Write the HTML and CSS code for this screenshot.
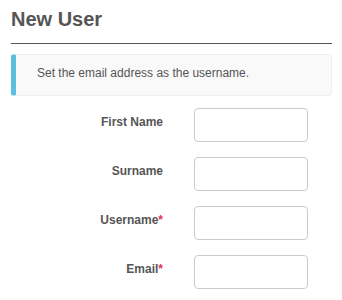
FILE: index.html
```html
<!DOCTYPE html>
<html lang="en">
<head>
    <meta charset="UTF-8">
    <meta name="viewport" content="width=device-width, initial-scale=1.0">
    <title>New User</title>
    <link rel="stylesheet" href="styles.css">
</head>
<body>
    <div class="container">
        <h1 class="page-title">New User</h1>

        <div class="callout">Set the email address as the username.</div>

        <form class="user-form">
            <div class="form-row">
                <label for="first-name">First Name</label>
                <input type="text" id="first-name">
            </div>
            <div class="form-row">
                <label for="surname">Surname</label>
                <input type="text" id="surname">
            </div>
            <div class="form-row">
                <label for="username">Username<span class="req">*</span></label>
                <input type="text" id="username">
            </div>
            <div class="form-row">
                <label for="email">Email<span class="req">*</span></label>
                <input type="email" id="email">
            </div>
        </form>
    </div>
</body>
</html>
```

FILE: styles.css
```css
body {
    margin: 0;
    font-family: "Liberation Sans", Arial, sans-serif;
    font-size: 12px;
    line-height: 17px;
    color: #555;
    background: #fff;
}
.container {
    padding: 0 10px 0 11px;
}
.page-title {
    margin: 8px 0 0;
    padding-bottom: 13px;
    font-size: 20px;
    line-height: 22px;
    font-weight: bold;
    color: #555;
    border-bottom: 1px solid #555;
}
.callout {
    margin-top: 10px;
    padding: 10px 20px 13px 21px;
    background: #f9f9f9;
    border: 1px solid #eee;
    border-left: 5px solid #5bc0de;
    border-radius: 3px;
}
.user-form {
    margin-top: 12px;
}
.form-row {
    display: grid;
    grid-template-columns: 152px 114px;
    column-gap: 31px;
    margin-bottom: 15px;
}
.form-row label {
    text-align: right;
    font-weight: bold;
    padding-top: 6px;
}
.req {
    color: #e8334a;
}
.form-row input {
    box-sizing: border-box;
    width: 114px;
    height: 34px;
    margin: 0;
    padding: 6px 10px;
    border: 1px solid #ccc;
    border-radius: 4px;
    background: #fff;
    font: inherit;
}
```
